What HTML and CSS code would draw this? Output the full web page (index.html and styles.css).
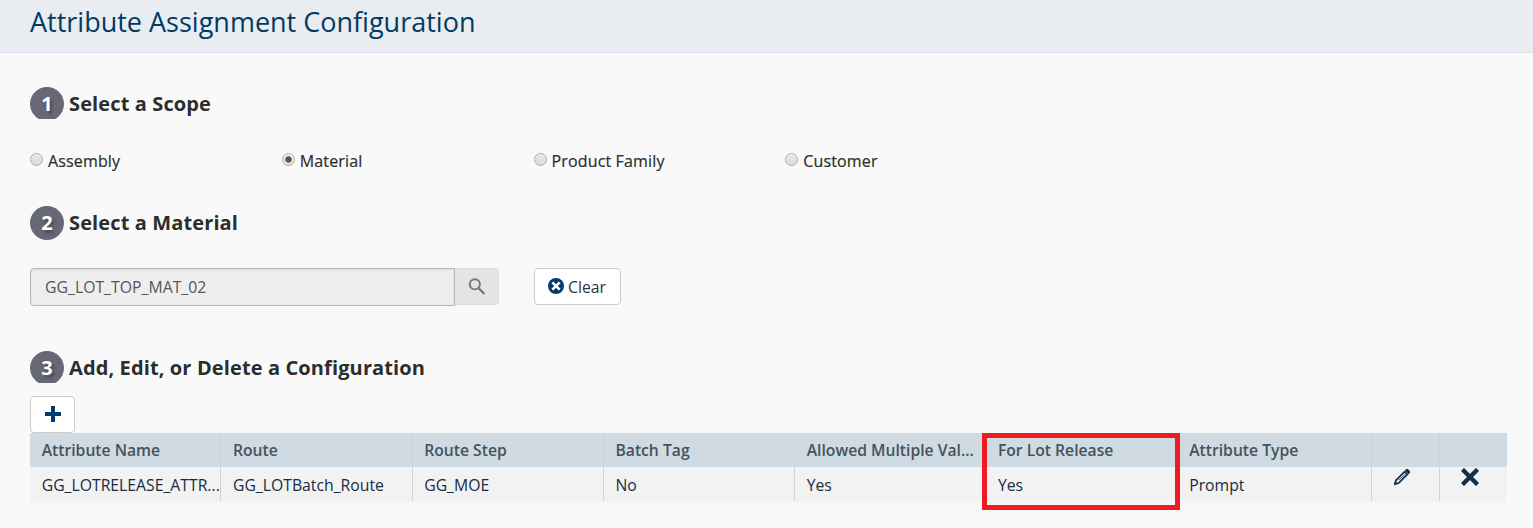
FILE: index.html
```html
<!DOCTYPE html>
<html lang="en">
<head>
<meta charset="utf-8">
<title>Attribute Assignment Configuration</title>
<link rel="stylesheet" href="styles.css">
</head>
<body>
<header class="page-header"><h1 class="page-title">Attribute Assignment Configuration</h1></header>
<main class="content">
  <section class="scope">
    <div class="step"><span class="badge badge-cut">1</span><h2 class="step-title">Select a Scope</h2></div>
    <div class="radios">
      <label class="option"><span class="radio"></span><span>Assembly</span></label>
      <label class="option"><span class="radio checked"></span><span>Material</span></label>
      <label class="option"><span class="radio"></span><span>Product Family</span></label>
      <label class="option"><span class="radio"></span><span>Customer</span></label>
    </div>
  </section>
  <section class="material">
    <div class="step"><span class="badge">2</span><h2 class="step-title">Select a Material</h2></div>
    <div class="lookup">
      <div class="field"><span>GG_LOT_TOP_MAT_02</span></div>
      <div class="search">
        <svg width="18" height="18" viewBox="0 0 18 18"><circle cx="6.8" cy="6.3" r="5.1" fill="none" stroke="#777" stroke-width="1.9"/><path d="M10.2 9.8L16.4 16" stroke="#777" stroke-width="2.3"/></svg>
      </div>
      <button class="clear" type="button">
        <svg width="16" height="16" viewBox="0 0 16 16"><circle cx="8" cy="8" r="8" fill="#003c71"/><path d="M4.3 4.3L11.7 11.7M11.7 4.3L4.3 11.7" stroke="#fff" stroke-width="2.6"/></svg>
        <span class="clear-label">Clear</span>
      </button>
    </div>
  </section>
  <section class="config">
    <div class="step"><span class="badge badge-cut">3</span><h2 class="step-title">Add, Edit, or Delete a Configuration</h2></div>
    <button class="add" type="button" aria-label="Add">
      <svg width="16" height="16" viewBox="0 0 16 16"><path d="M8 0V16M0 8H16" stroke="#003c71" stroke-width="4"/></svg>
    </button>
    <div class="grid">
      <div class="row head">
        <div class="cell"><span>Attribute Name</span></div><div class="cell"><span>Route</span></div><div class="cell"><span>Route Step</span></div><div class="cell"><span>Batch Tag</span></div><div class="cell"><span>Allowed Multiple Val...</span></div><div class="cell"><span>For Lot Release</span></div><div class="cell"><span>Attribute Type</span></div><div class="cell"></div><div class="cell"></div>
      </div>
      <div class="row data">
        <div class="cell"><span>GG_LOTRELEASE_ATTR...</span></div><div class="cell"><span>GG_LOTBatch_Route</span></div><div class="cell"><span>GG_MOE</span></div><div class="cell"><span>No</span></div><div class="cell"><span>Yes</span></div><div class="cell"><span>Yes</span></div><div class="cell"><span>Prompt</span></div>
        <div class="cell action"><svg width="18" height="18" viewBox="0 0 18 18"><path d="M2 16L3 12.3L11.6 3.7L14.3 6.4L5.7 15Z" fill="none" stroke="#12304d" stroke-width="1.7"/><path fill="#12304d" d="M1 17L2 13.2L4.8 16ZM11.8 2.4L13.2 1Q14 .4 14.8 1L17 3.2Q17.6 4 17 4.8L15.6 6.2Z"/><path d="M6 12.1L11.9 6.2" stroke="#12304d" stroke-width=".8"/></svg></div>
        <div class="cell action"><svg width="18" height="18" viewBox="0 0 18 18"><path d="M3 3L15 15M15 3L3 15" stroke="#12304d" stroke-width="4.4" stroke-linecap="square" stroke-linejoin="round"/></svg></div>
      </div>
      <div class="highlight"></div>
    </div>
  </section>
</main>
</body>
</html>
```
FILE: styles.css
```css
* { box-sizing: border-box; }
body { margin: 0; height: 528px; overflow: hidden; display: flex; flex-direction: column; background: #f9f9f9; color: #2d2d2d; font-family: "Open Sans", "Noto Sans", sans-serif; font-size: 16px; }
svg { display: block; flex: none; }
h1, h2 { margin: 0; }
.page-header { flex: none; height: 53px; padding: 3px 30px 0; background: #e9ecf1; border-bottom: 1px solid #dcdfe7; }
.page-title { font-size: 27px; line-height: 37px; font-weight: 400; color: #003c64; white-space: nowrap; }
.content { flex: 1; display: flex; flex-direction: column; padding: 34px 26px 0 30px; }
.scope { height: 119px; }
.material { height: 145px; }
.config { flex: 1; display: flex; flex-direction: column; }
.step { display: flex; align-items: flex-start; gap: 5px; height: 34px; }
.badge { width: 34px; height: 34px; border-radius: 50%; background: #686775; color: #fff; font-weight: 700; font-size: 20px; line-height: 34px; text-align: center; text-shadow: 2px 3px 3px rgba(0,0,0,.3); }
.badge-cut { clip-path: inset(0 0 2px 0); }
.step-title { font-size: 20px; line-height: 33px; font-weight: 700; letter-spacing: .12px; white-space: nowrap; }
.radios { display: grid; grid-template-columns: repeat(4, 251.75px); margin-top: 29px; }
.option { display: flex; gap: 5px; line-height: 22px; font-size: 16px; letter-spacing: .15px; -webkit-text-stroke: .2px #2d2d2d; }
.radio { width: 13px; height: 13px; margin-top: 3px; border: 1px solid #aaa; border-radius: 50%; background: linear-gradient(#e6e6e6, #dcdcdc); box-shadow: inset 0 1px 1px #f5f5f5; }
.checked { background: radial-gradient(circle, #555 0 2.8px, #e6e6e6 3.6px); }
.lookup { display: flex; margin-top: 28px; }
.field { width: 425px; height: 38px; padding: 0 14px; border: 1px solid #b5b5b5; border-radius: 4px 0 0 4px; background: #eee; box-shadow: inset 0 1px 2px rgba(0,0,0,.08); color: #555; font-size: 15.8px; line-height: 37px; }
.search { width: 44px; height: 37px; padding: 9px 0 0 13px; background: #e4e4e4; border: 1px solid #dcdcdc; border-left: 0; border-radius: 0 4px 4px 0; }
.clear { display: flex; align-items: center; gap: 4px; width: 87px; height: 37px; margin-left: 35px; padding: 0 13px; border: 1px solid #ccc; border-radius: 4px; background: #fff; color: #333; font: 400 15.8px/35px "Open Sans", sans-serif; }
.clear svg { margin-top: -2px; }
.clear-label { padding-top: 1px; }
.add { display: flex; align-items: center; justify-content: center; width: 45px; height: 37px; margin-top: 11px; padding: 0 0 1px; border: 1px solid #ccc; border-radius: 4px; background: #fff; }
.grid { position: relative; flex: 1; background: #f7f7f7; }
.row { display: grid; grid-template-columns: repeat(6, 191.25px) 194.5px 68px 67px; height: 34px; }
.cell { padding-left: 11.7px; border-right: 1px solid #d2d2d2; white-space: nowrap; line-height: 35px; overflow: hidden; }
.cell:last-child { border-right: 0; }
.head { background: #cfdae2; color: #44535c; font-size: 15.7px; font-weight: 600; }
.data { background: #f2f2f2; color: #162c42; font-size: 15.75px; }
.data .cell { line-height: 37px; }
.data .action { display: flex; justify-content: center; padding: 1px 7px 0 0; }
.highlight { position: absolute; left: 952px; top: 0; width: 198px; height: 77px; border: 5px solid #ed1c24; }
```
